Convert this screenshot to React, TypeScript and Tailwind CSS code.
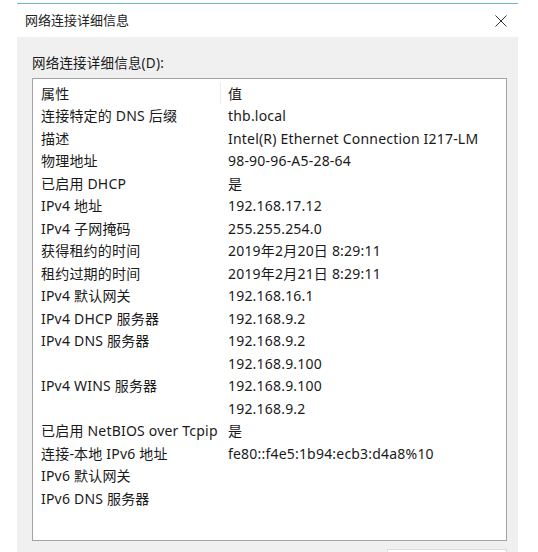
import React from 'react';

const rows: [string, string][] = [
  ['连接特定的 DNS 后缀', 'thb.local'],
  ['描述', 'Intel(R) Ethernet Connection I217-LM'],
  ['物理地址', '98-90-96-A5-28-64'],
  ['已启用 DHCP', '是'],
  ['IPv4 地址', '192.168.17.12'],
  ['IPv4 子网掩码', '255.255.254.0'],
  ['获得租约的时间', '2019年2月20日 8:29:11'],
  ['租约过期的时间', '2019年2月21日 8:29:11'],
  ['IPv4 默认网关', '192.168.16.1'],
  ['IPv4 DHCP 服务器', '192.168.9.2'],
  ['IPv4 DNS 服务器', '192.168.9.2'],
  ['', '192.168.9.100'],
  ['IPv4 WINS 服务器', '192.168.9.100'],
  ['', '192.168.9.2'],
  ['已启用 NetBIOS over Tcpip', '是'],
  ['连接-本地 IPv6 地址', 'fe80::f4e5:1b94:ecb3:d4a8%10'],
  ['IPv6 默认网关', ''],
  ['IPv6 DNS 服务器', ''],
];

function Row({ name, value }: { name: string; value: string }) {
  return (
    <div className="flex h-[22.5px] items-center">
      <div className="w-[188px] shrink-0 whitespace-nowrap pl-[8px]">{name}</div>
      <div className="whitespace-nowrap pl-[7px]">{value}</div>
    </div>
  );
}

export default function App() {
  return (
    <div
      className="h-[552px] w-[538px] overflow-hidden bg-white pl-[17px] pt-[3px] text-[14px] tracking-[0.2px] text-[#1a1a1a]"
      style={{ fontFamily: '"Noto Sans", "Noto Sans CJK SC", sans-serif' }}
    >
      <div className="flex h-[549px] w-[501px] flex-col border-t border-[#6cb8c4]">
        <div className="flex h-[33px] shrink-0 items-center justify-between bg-white pl-[8px] pr-[11px]">
          <span className="text-[13px] tracking-normal text-[#222]">网络连接详细信息</span>
          <svg width="12" height="12" viewBox="0 0 12 12" className="text-[#333]">
            <path d="M0.5 0.5 L11.5 11.5 M11.5 0.5 L0.5 11.5" stroke="currentColor" strokeWidth="1" />
          </svg>
        </div>
        <div className="flex flex-1 flex-col bg-[#f0f0f0] pl-[15px] pr-[11px]">
          <div className="flex h-[41px] items-end pb-[5px] text-[13.5px]">网络连接详细信息(D):</div>
          <div className="h-[463px] border border-[#a3a3a3] bg-white pt-[3px]">
            <div className="flex h-[22.5px] items-center">
              <div className="w-[188px] shrink-0 border-r border-[#ececec] pl-[8px]">属性</div>
              <div className="pl-[7px]">值</div>
            </div>
            {rows.map(([n, v], i) => (
              <Row key={i} name={n} value={v} />
            ))}
          </div>
          <div className="flex justify-end pt-[8px]">
            <div className="h-[24px] w-[120px] border border-[#dcdcdc] bg-white" />
          </div>
        </div>
      </div>
    </div>
  );
}
